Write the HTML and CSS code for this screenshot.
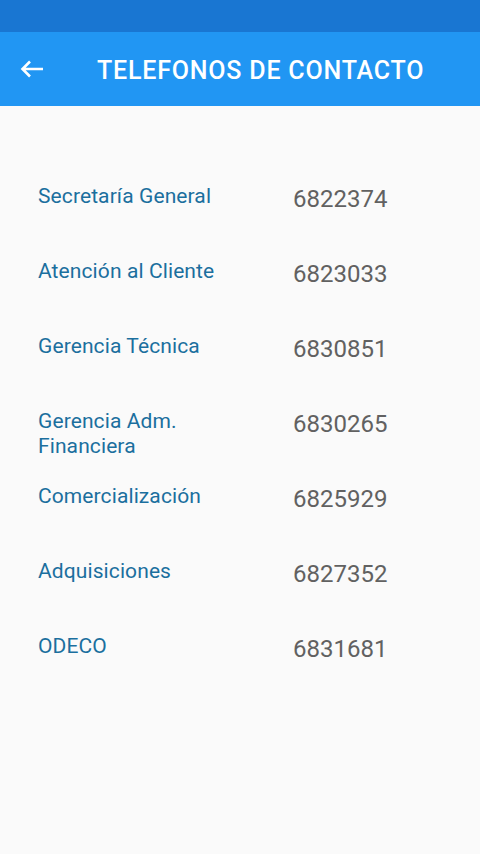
FILE: index.html
```html
<!DOCTYPE html>
<html lang="es">
<head>
    <meta charset="UTF-8">
    <meta name="viewport" content="width=device-width, initial-scale=1.0">
    <title>Telefonos de Contacto</title>
    <link rel="stylesheet" href="styles.css">
</head>
<body>

    <div class="status-bar"></div>

    <header class="toolbar">
        <svg class="back" width="24" height="18" viewBox="0 0 24 18">
            <path d="M23 9H2.5M10 1.5L2.5 9l7.5 7.5" fill="none" stroke="#fff" stroke-width="2.6"/>
        </svg>
        <h1>TELEFONOS DE CONTACTO</h1>
    </header>

    <div class="contacts">
        <div class="row">
            <span class="name">Secretaría General</span>
            <span class="phone">6822374</span>
        </div>
        <div class="row">
            <span class="name">Atención al Cliente</span>
            <span class="phone">6823033</span>
        </div>
        <div class="row">
            <span class="name">Gerencia Técnica</span>
            <span class="phone">6830851</span>
        </div>
        <div class="row">
            <span class="name">Gerencia Adm. Financiera</span>
            <span class="phone">6830265</span>
        </div>
        <div class="row">
            <span class="name">Comercialización</span>
            <span class="phone">6825929</span>
        </div>
        <div class="row">
            <span class="name">Adquisiciones</span>
            <span class="phone">6827352</span>
        </div>
        <div class="row">
            <span class="name">ODECO</span>
            <span class="phone">6831681</span>
        </div>
    </div>

</body>
</html>
```

FILE: styles.css
```css
/* General body styling */
body {
    font-family: Roboto, "Noto Sans", sans-serif;
    background-color: #fafafa;
    margin: 0;
    height: 854px;
}

.status-bar {
    height: 32px;
    background-color: #1976d2;
}

.toolbar {
    height: 74px;
    background-color: #2196f3;
    display: flex;
    align-items: center;
    padding-left: 20px;
}

.back {
    width: 24px;
    height: 18px;
    margin-right: 53px;
}

.toolbar h1 {
    color: white;
    font-size: 25px;
    font-weight: 500;
    letter-spacing: 0.8px;
    margin: 0;
    margin-top: 2px;
}

.contacts {
    padding: 78px 0 0 38px;
}

.row {
    display: grid;
    grid-template-columns: 200px 1fr;
    column-gap: 55px;
    height: 75px;
}

.name {
    color: #1b6f9e;
    font-size: 21px;
    letter-spacing: 0.1px;
    line-height: 25px;
}

.phone {
    color: #616161;
    font-size: 24px;
    line-height: 25px;
    padding-top: 3px;
}
```
